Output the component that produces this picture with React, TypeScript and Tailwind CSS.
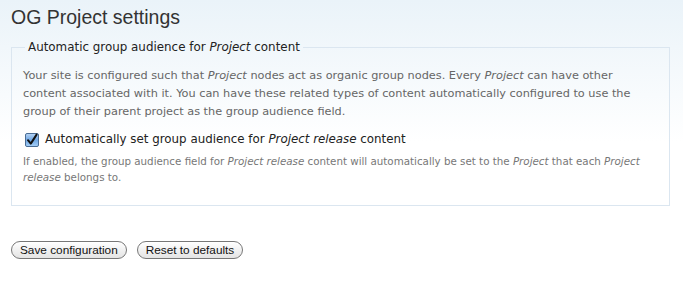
import React from "react";

const CheckIcon: React.FC = () => (
  <svg width="14" height="14" viewBox="0 0 14 14" className="shrink-0">
    <defs>
      <linearGradient id="cb" x1="0" y1="0" x2="0" y2="1">
        <stop offset="0" stopColor="#b9d6f5" />
        <stop offset="0.5" stopColor="#6fa6e3" />
        <stop offset="1" stopColor="#a7d0f7" />
      </linearGradient>
    </defs>
    <rect x="0.5" y="0.5" width="13" height="13" rx="1.5" fill="url(#cb)" stroke="#4a6c94" />
    <path d="M3 7.2 L5.8 10.6 L11.6 1.6" fill="none" stroke="#111" strokeWidth="2" strokeLinecap="round" strokeLinejoin="round" />
  </svg>
);

const App: React.FC = () => {
  return (
    <div className="w-[683px] h-[284px] bg-gradient-to-b from-[#eaf3f9] via-white to-white font-['DejaVu_Sans',sans-serif] pl-[11px] pr-[13px]">
      <h1 className="pt-[4px] text-[19.5px] leading-[26px] text-[#333] font-['Liberation_Sans',sans-serif]">
        OG Project settings
      </h1>

      <fieldset className="mt-[9px] border border-[#dbe6f0] h-[167px] pl-[11px] pr-[4px] pt-[10px]">
        <legend className="ml-[2px] px-[3px] text-[11.9px] text-[#222]">
          Automatic group audience for <em>Project</em> content
        </legend>
        <p className="text-[11.3px] leading-[18px] text-[#666] whitespace-nowrap">
          Your site is configured such that <em>Project</em> nodes act as organic group nodes. Every <em>Project</em> can have other
          <br />
          content associated with it. You can have these related types of content automatically configured to use the
          <br />
          group of their parent project as the group audience field.
        </p>
        <label className="mt-[10px] flex items-center gap-[6px] pl-[2px] text-[11.85px] text-[#222]">
          <CheckIcon />
          <span>
            Automatically set group audience for <em>Project release</em> content
          </span>
        </label>
        <p className="mt-[4px] pr-[8px] text-[10.3px] leading-[16px] text-[#777]">
          If enabled, the group audience field for <em>Project release</em> content will automatically be set to the <em>Project</em> that each <em>Project release</em> belongs to.
        </p>
      </fieldset>

      <div className="mt-[35px] flex gap-[10px] font-['Liberation_Sans',sans-serif]">
        <button className="h-[18px] px-[8px] rounded-full border border-[#777] bg-gradient-to-b from-white to-[#e4e4e4] text-[11.8px] leading-[16px] text-[#111] shadow-[inset_0_1px_0_#fff]">
          Save configuration
        </button>
        <button className="h-[18px] px-[8px] rounded-full border border-[#777] bg-gradient-to-b from-white to-[#e4e4e4] text-[11.8px] leading-[16px] text-[#111] shadow-[inset_0_1px_0_#fff]">
          Reset to defaults
        </button>
      </div>
    </div>
  );
};

export default App;
